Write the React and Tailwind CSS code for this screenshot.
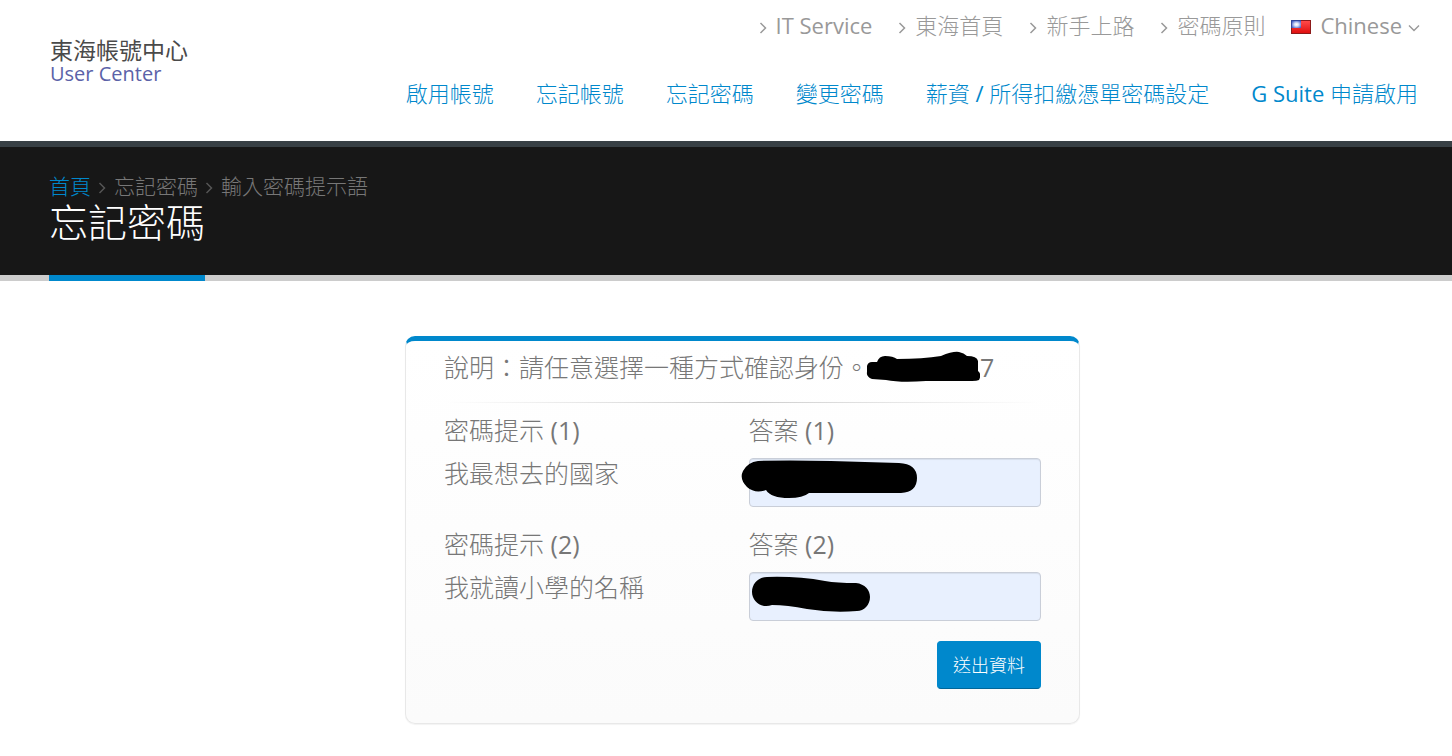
const topLinks = ['IT Service', '東海首頁', '新手上路', '密碼原則'];
const navLinks = ['啟用帳號', '忘記帳號', '忘記密碼', '變更密碼', '薪資 / 所得扣繳憑單密碼設定', 'G Suite 申請啟用'];

function AngleRight({ className }) {
  return (
    <svg className={className} width="8" height="12" viewBox="0 0 8 12" fill="none" stroke="currentColor" strokeWidth="1.5" aria-hidden="true">
      <path d="M1.5 1 6.5 6 1.5 11" />
    </svg>
  );
}

function AngleDown() {
  return (
    <svg className="mt-1" width="12" height="8" viewBox="0 0 12 8" fill="none" stroke="currentColor" strokeWidth="1.4" aria-hidden="true">
      <path d="M1 1.5 6 6.5 11 1.5" />
    </svg>
  );
}

function Flag() {
  return (
    <svg className="mt-[2px]" width="20" height="14" viewBox="0 0 20 14" aria-hidden="true">
      <defs>
        <linearGradient id="flagRed" x1="0" y1="0" x2="0" y2="1">
          <stop offset="0" stopColor="#ff4a4a" />
          <stop offset="1" stopColor="#e01010" />
        </linearGradient>
        <radialGradient id="flagSun" cx="0.5" cy="0.5" r="0.6">
          <stop offset="0" stopColor="#fff" />
          <stop offset="0.35" stopColor="#dfe6fb" />
          <stop offset="1" stopColor="#4a66cc" />
        </radialGradient>
      </defs>
      <rect width="20" height="14" fill="#8c1a1a" />
      <rect x="1" y="1" width="18" height="12" fill="url(#flagRed)" />
      <rect width="10" height="8" fill="#33479c" />
      <rect x="1" y="1" width="9" height="7" fill="url(#flagSun)" />
    </svg>
  );
}

function Header() {
  return (
    <header className="flex justify-between border-b-6 border-[#384045] pr-8 pl-[50px]">
      <a href="#home" className="pt-[37px] font-['Open_Sans','Noto_Sans_CJK_TC',sans-serif] text-[23px] leading-[26px] text-[#4a4a4a]">
        東海帳號中心
        <span className="block text-[20px] leading-[22px] text-[#5b62a8]">User Center</span>
      </a>
      <div className="flex h-[141px] flex-col items-end">
        <ul className="flex h-[51px] items-center text-[22px] text-[#999]">
          {topLinks.map((label) => (
            <li key={label} className="mr-[26px]">
              <a href="#top" className="flex items-center gap-[9px]">
                <AngleRight className="mt-1" />
                {label}
              </a>
            </li>
          ))}
          <li>
            <button type="button" className="flex items-center gap-[6px]">
              <Flag />
              <span className="ml-[3px]">Chinese</span>
              <AngleDown />
            </button>
          </li>
        </ul>
        <nav className="mt-[22px] flex h-10 items-center gap-[42px] pr-[2px] text-[22px] text-[#0088cc]">
          {navLinks.map((label) => (
            <a key={label} href="#nav">{label}</a>
          ))}
        </nav>
      </div>
    </header>
  );
}

function PageTitle() {
  return (
    <section className="border-b-6 border-[#ccc] bg-[#171717] pl-[49px]">
      <div className="flex h-[128px] flex-col items-start pt-6">
        <ol className="flex items-center text-[21px] leading-[30px] text-[#777]">
          <li className="text-[#0088cc]"><a href="#home">首頁</a></li>
          <li className="flex items-center"><AngleRight className="mt-1 mr-2 ml-[7px] text-[#555]" />忘記密碼</li>
          <li className="flex items-center"><AngleRight className="mt-1 mr-2 ml-[7px] text-[#555]" />輸入密碼提示語</li>
        </ol>
        <h1 className="h-20 shrink-0 border-b-6 border-[#0088cc] text-[39px] leading-[42px] text-white">忘記密碼</h1>
      </div>
    </section>
  );
}

function Answer({ n, hint, children }) {
  return (
    <div className="grid grid-cols-2 gap-x-3">
      <div>
        <p className="leading-[43px]">密碼提示 ({n})</p>
        <p className="leading-[43px]">{hint}</p>
      </div>
      <div>
        <label htmlFor={`answer${n}`} className="block h-[49px] leading-[43px]">答案 ({n})</label>
        <div className="relative">
          <input id={`answer${n}`} type="text" className="block h-[49px] w-full rounded-[4px] border border-[#c9ced8] bg-[#e8f0fe] px-4 shadow-[inset_0_1px_1px_rgba(0,0,0,0.075)]" />
          {children}
        </div>
      </div>
    </div>
  );
}

export default function App() {
  return (
    <div className="min-h-screen bg-white font-['Open_Sans','Noto_Sans_CJK_TC_Light','Noto_Sans_CJK_TC',sans-serif]">
      <Header />
      <PageTitle />
      <main className="flex justify-center pt-[55px] pb-8 pl-[33px]">
        <form
          onSubmit={(e) => e.preventDefault()}
          className="w-full max-w-[675px] overflow-hidden rounded-[10px] border border-t-5 border-[#e8e8e8] border-t-[#0088cc] bg-linear-to-b from-white to-[#fbfbfb] px-[38px] pb-[34px] text-[25px] text-[#777] shadow-[0_1px_1px_rgba(0,0,0,0.05)]"
        >
          <div className="flex h-[61px] items-center pb-2">
            <p>說明：請任意選擇一種方式確認身份。</p>
            <svg width="114" height="32" viewBox="0 0 114 32" className="-ml-[3px] mb-[2px]" aria-hidden="true">
              <path d="M1 15Q2 11 6 11H11Q13 5 19 5Q27 5 31 8Q57 8 75 5Q87 0 93 1Q98 2 101 5Q111 5 112 10V20Q116 23 113 29Q111 30 106 30L60 30Q35 32 20 29L6 28Q0 26 1 21Z" />
            </svg>
            <span>7</span>
          </div>
          <hr className="h-px border-0 bg-linear-to-r from-transparent via-black/20 to-transparent" />
          <div className="mt-[6px]">
            <Answer n={1} hint="我最想去的國家">
              <svg width="178" height="40" viewBox="0 0 178 40" className="absolute top-px -left-2" aria-hidden="true">
                <path d="M17 2Q45 1 90 2L158 4Q176 5 176 19Q176 33 160 34L68 34Q62 39 48 39Q30 39 25 31Q14 35 6 28Q-2 20 2 12Q7 3 17 2Z" />
              </svg>
            </Answer>
          </div>
          <div className="mt-4">
            <Answer n={2} hint="我就讀小學的名稱">
              <svg width="120" height="40" viewBox="0 0 120 40" className="absolute top-1 left-[3px]" aria-hidden="true">
                <path d="M15 1Q45 0 73 5Q85 7 104 7C113 8 118 14 118 21C118 29 112 35 105 35Q80 37 55 33Q35 29 20 29C9 33 0 25 0 16C0 8 6 1 15 1Z" />
              </svg>
            </Answer>
          </div>
          <div className="mt-5 flex justify-end">
            <button type="submit" className="h-12 rounded-[4px] border border-[#0088cc] border-b-[#006699] bg-[#0088cc] px-[15px] text-[18px] text-white">
              送出資料
            </button>
          </div>
        </form>
      </main>
    </div>
  );
}
